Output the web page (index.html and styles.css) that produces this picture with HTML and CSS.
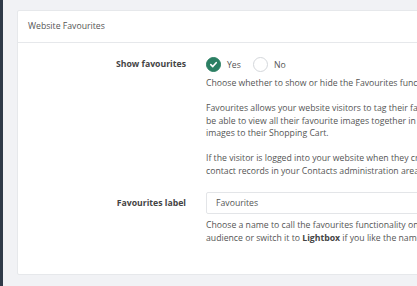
FILE: index.html
```html
<!DOCTYPE html>
<html>
<head>
<meta charset="utf-8">
<link rel="stylesheet" href="styles.css">
<title>Website Favourites</title>
</head>
<body>
<div class="page">
  <div class="card">
    <div class="card-header">Website Favourites</div>
    <div class="card-body">

      <div class="form-row">
        <div class="form-label">Show favourites</div>
        <div class="form-control">
          <div class="radios">
            <label class="radio">
              <span class="radio-dot checked">
                <svg width="9" height="9" viewBox="0 0 10 10"><path d="M2 5.2 L4.2 7.3 L8 3" fill="none" stroke="#fff" stroke-width="1.8" stroke-linecap="round" stroke-linejoin="round"/></svg>
              </span>
              Yes
            </label>
            <label class="radio">
              <span class="radio-dot"></span>
              No
            </label>
          </div>
          <p class="help first">Choose whether to show or hide the Favourites functionality on your website.</p>
          <p class="help">Favourites allows your website visitors to tag their favourite images. They will<br>
          be able to view all their favourite images together in one place and can add those<br>
          images to their Shopping Cart.</p>
          <p class="help">If the visitor is logged into your website when they create favourites, they are saved to their<br>
          contact records in your Contacts administration area.</p>
        </div>
      </div>

      <div class="form-row">
        <div class="form-label tall">Favourites label</div>
        <div class="form-control">
          <input class="text-input" type="text" value="Favourites">
          <p class="help first">Choose a name to call the favourites functionality on your website that best suits your<br>
          audience or switch it to <b>Lightbox</b> if you like the name better.</p>
        </div>
      </div>

    </div>
  </div>
</div>
</body>
</html>
```

FILE: styles.css
```css
html, body {
    margin: 0;
    height: 100%;
}

body {
    background: #f1f2f5;
    border-left: 3px solid #2f3a48;
    font-family: "Open Sans", "Liberation Sans", sans-serif;
    font-size: 8.7px;
    color: #555;
    overflow: hidden;
}

.page {
    padding: 10px 0 0 14px;
}

.card {
    width: 700px;
    background: #fff;
    border: 1px solid #e6e8eb;
    border-radius: 2px;
}

.card-header {
    height: 31px;
    line-height: 31px;
    padding: 0 10px;
    border-bottom: 1px solid #e6e8eb;
    color: #555;
}

.card-body {
    padding: 14px 0 30px;
}

.form-row {
    display: grid;
    grid-template-columns: 168px 1fr;
    column-gap: 20px;
    margin-bottom: 15px;
}

.form-row:last-child {
    margin-bottom: 0;
}

.form-label {
    text-align: right;
    font-weight: bold;
    color: #444;
    line-height: 15px;
}

.form-label.tall {
    line-height: 22px;
}

.radios {
    display: flex;
    gap: 12px;
    height: 15px;
    align-items: center;
}

.radio {
    display: flex;
    align-items: center;
    gap: 6px;
    color: #555;
}

.radio-dot {
    width: 13px;
    height: 13px;
    border: 1px solid #d4d7db;
    border-radius: 50%;
    background: #fff;
    display: flex;
    align-items: center;
    justify-content: center;
}

.radio-dot.checked {
    background: #2b7f63;
    border-color: #2b7f63;
}

.help {
    margin: 12.5px 0 0;
    line-height: 12.5px;
    white-space: nowrap;
}

.help.first {
    margin-top: 5px;
}

.help b {
    color: #444;
}

.text-input {
    display: block;
    box-sizing: border-box;
    width: 100%;
    height: 22px;
    padding: 0 9px;
    border: 1px solid #e3e5e8;
    border-radius: 2px;
    font-family: inherit;
    font-size: 8.7px;
    color: #555;
    outline: none;
}
```
